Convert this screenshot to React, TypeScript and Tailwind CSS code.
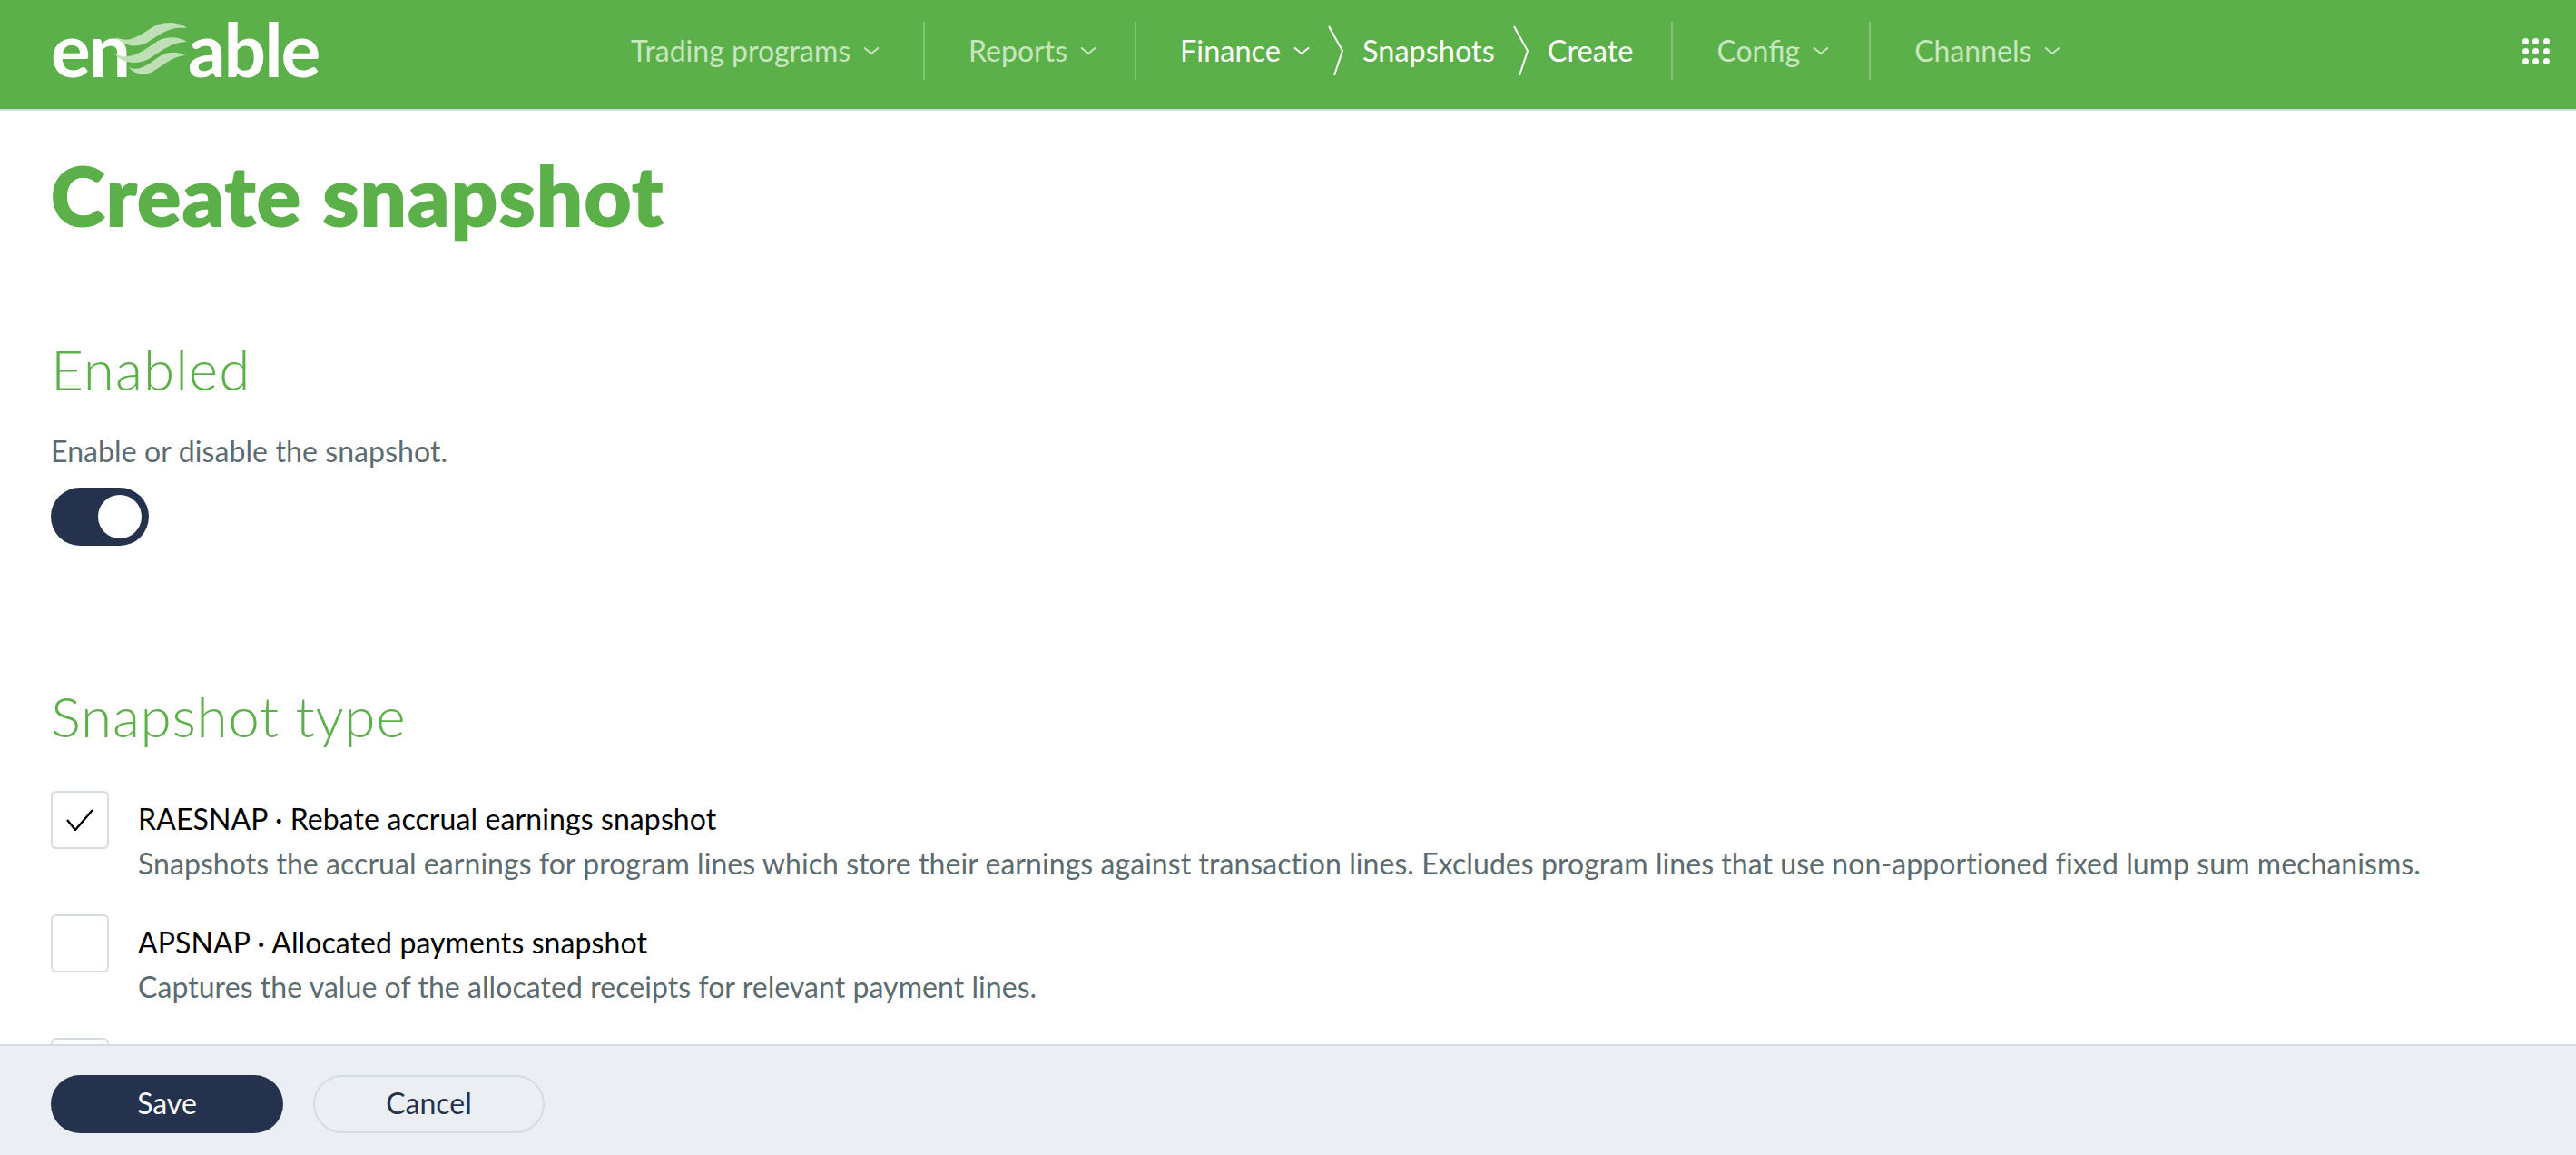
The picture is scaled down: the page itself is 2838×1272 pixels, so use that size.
const font = "font-['Lato','Noto_Sans',sans-serif]";

function Caret() {
  return (
    <svg className="w-[18px] h-[10px] ml-[14px] shrink-0" viewBox="0 0 18 10" fill="none" stroke="currentColor" strokeWidth="2">
      <path d="M1 1.5 L9 8 L17 1.5" />
    </svg>
  );
}

function Crumb() {
  return (
    <svg className="w-[18px] h-[56px] mx-[20px] shrink-0" viewBox="0 0 18 56" fill="none" stroke="#fff" strokeWidth="2">
      <path d="M1 1 L16 28 L7 55" />
    </svg>
  );
}

function NavItem({ label, pr }: { label: string; pr: string }) {
  return (
    <div className={`flex items-center h-16 pl-[48px] ${pr} border-l-2 border-white/25 text-[#c7e6bf]`}>
      <span>{label}</span>
      <Caret />
    </div>
  );
}

function Logo() {
  return (
    <div className="relative w-[296px] h-[64px] text-white font-bold text-[82px] leading-[64px] tracking-[-2px]">
      <span className="absolute left-0 top-[-3px]">en</span>
      <span className="absolute left-[151px] top-[-3px]">able</span>
      <svg className="absolute left-[68px] top-0" width="90" height="64" viewBox="0 0 90 64" fill="#bfe0b6">
        <path d="M4 17 C22 26 34 10 50 3 C62 -1 76 1 82 7 C64 4 52 14 38 23 C26 29 12 27 4 17 Z" />
        <path d="M1 34 C18 46 36 30 50 21 C60 16 72 16 82 22 C66 22 54 32 40 41 C26 48 10 46 1 34 Z" />
        <path d="M18 50 C30 56 40 46 52 38 C60 33 72 32 80 37 C66 38 56 48 44 55 C34 60 24 58 18 50 Z" />
      </svg>
    </div>
  );
}

function Option({ checked, title, text }: { checked?: boolean; title?: string; text?: string }) {
  return (
    <div className="flex gap-[32px] shrink-0 h-[98px]">
      <div className="w-[64px] h-[64px] rounded-[6px] border-2 border-[#d6dde0] bg-white flex items-center justify-center shrink-0">
        {checked && (
          <svg width="30" height="24" viewBox="0 0 30 24" fill="none" stroke="#000" strokeWidth="2.4">
            <path d="M1 12 L10 23 L29 1" />
          </svg>
        )}
      </div>
      {title && (
        <div className="pt-[11px]">
          <div className="text-[32px] leading-[40px] tracking-[0.1px] text-black">{title}</div>
          <div className="text-[32px] leading-[40px] mt-[9px] tracking-[0.06px] text-[#5b6b70]">{text}</div>
        </div>
      )}
    </div>
  );
}

export default function App() {
  return (
    <div className={`${font} h-screen flex flex-col bg-white overflow-hidden`}>
      <header className="h-[122px] shrink-0 bg-[#5cb04a] border-b-2 border-[#d5dde0] flex items-center text-[32px] pl-[56px] pr-[29px] pb-[8px]">
        <Logo />
        <nav className="flex items-center ml-[343px] flex-1">
          <div className="flex items-center h-16 pr-[48px] text-[#c7e6bf]">
            <span>Trading programs</span>
            <Caret />
          </div>
          <NavItem label="Reports" pr="pr-[42px]" />
          <div className="flex items-center h-16 pl-[48px] pr-[42px] border-l-2 border-white/25 text-white text-[32.5px]">
            <span>Finance</span>
            <Caret />
            <Crumb />
            <span>Snapshots</span>
            <Crumb />
            <span>Create</span>
          </div>
          <NavItem label="Config" pr="pr-[44px]" />
          <NavItem label="Channels" pr="pr-[44px]" />
        </nav>
        <div className="grid grid-cols-3 gap-[4px] w-[30px]">
          {Array.from({ length: 9 }).map((_, i) => (
            <div key={i} className="w-[7px] h-[7px] rounded-full bg-white" />
          ))}
        </div>
      </header>

      <main className="flex-1 min-h-0 overflow-hidden px-[56px] pt-[42px] flex flex-col">
        <h1 className="text-[90px] leading-[100px] font-black tracking-[1.5px] text-[#5cb04a] [-webkit-text-stroke:2px_#5cb04a]">Create snapshot</h1>

        <h2 className="mt-[106px] text-[62px] leading-[72px] font-light tracking-[1px] text-[#5cb04a]">Enabled</h2>
        <p className="mt-[35px] text-[32px] leading-[40px] tracking-[0.1px] text-[#5b6b70]">Enable or disable the snapshot.</p>
        <div className="mt-[20px] w-[108px] h-[64px] rounded-full bg-[#24324d] p-[8px] flex justify-end shrink-0">
          <div className="w-[48px] h-[48px] rounded-full bg-white" />
        </div>

        <h2 className="mt-[151px] text-[62px] leading-[72px] font-light tracking-[0.7px] text-[#5cb04a]">Snapshot type</h2>
        <div className="mt-[47px] flex flex-col gap-[38px]">
          <Option
            checked
            title="RAESNAP · Rebate accrual earnings snapshot"
            text="Snapshots the accrual earnings for program lines which store their earnings against transaction lines. Excludes program lines that use non-apportioned fixed lump sum mechanisms."
          />
          <Option
            title="APSNAP · Allocated payments snapshot"
            text="Captures the value of the allocated receipts for relevant payment lines."
          />
          <Option />
        </div>
      </main>

      <footer className="h-[122px] shrink-0 bg-[#ebeef3] border-t-2 border-[#d5dde0] flex gap-[33px] pl-[56px] pt-[32px] text-[32px] leading-[40px]">
        <button className="w-[256px] h-[64px] rounded-full bg-[#24324d] text-white pb-[2px]">Save</button>
        <button className="w-[255px] h-[64px] rounded-full border-2 border-[#d5dde0] text-[#24324d] pb-[2px]">Cancel</button>
      </footer>
    </div>
  );
}
